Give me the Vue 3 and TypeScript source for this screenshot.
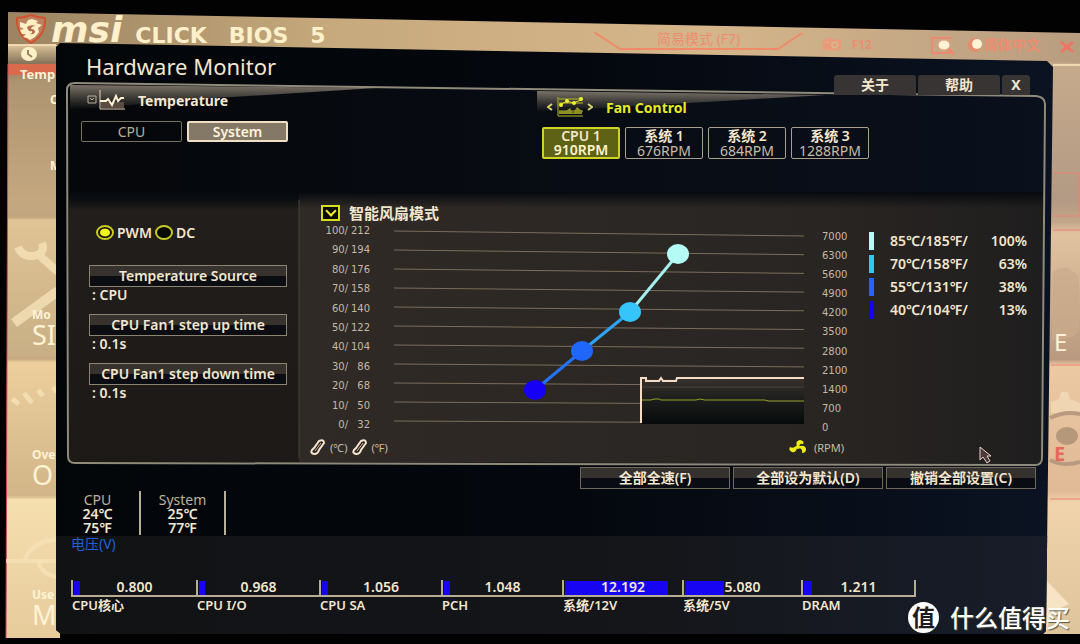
<script setup lang="ts">
import { ref } from 'vue'

interface Fan { name: string; rpm: string }
interface Point { x: number; y: number; color: string; temp: string; duty: string }
interface Rail { name: string; value: string; fill: number }

const fans: Fan[] = [
  { name: 'CPU 1', rpm: '910RPM' },
  { name: '系统 1', rpm: '676RPM' },
  { name: '系统 2', rpm: '684RPM' },
  { name: '系统 3', rpm: '1288RPM' },
]
const activeFan = ref(0)
const sensor = ref('System')
const mode = ref('pwm')
const smart = ref(true)

const settings = [
  { label: 'Temperature Source', value: ': CPU' },
  { label: 'CPU Fan1 step up time', value: ': 0.1s' },
  { label: 'CPU Fan1 step down time', value: ': 0.1s' },
]

const tempTicks: string[][] = [
  ['100/', '212'], ['90/', '194'], ['80/', '176'], ['70/', '158'], ['60/', '140'], ['50/', '122'],
  ['40/', '104'], ['30/', '86'], ['20/', '68'], ['10/', '50'], ['0/', '32'],
]
const rpmTicks = [7000, 6300, 5600, 4900, 4200, 3500, 2800, 2100, 1400, 700, 0]

const points: Point[] = [
  { x: 284, y: 24, color: '#b4fbf6', temp: '85℃/185℉/', duty: '100%' },
  { x: 236, y: 82, color: '#36c5fb', temp: '70℃/158℉/', duty: '63%' },
  { x: 188, y: 121, color: '#1f66fb', temp: '55℃/131℉/', duty: '38%' },
  { x: 141, y: 160, color: '#1600f5', temp: '40℃/104℉/', duty: '13%' },
]
const segments = [
  { from: points[1], to: points[0], color: '#a4f0ee' },
  { from: points[2], to: points[1], color: '#2fa4f5' },
  { from: points[3], to: points[2], color: '#2372f5' },
]

const rails: Rail[] = [
  { name: 'CPU核心', value: '0.800', fill: 5 },
  { name: 'CPU I/O', value: '0.968', fill: 5 },
  { name: 'CPU SA', value: '1.056', fill: 5 },
  { name: 'PCH', value: '1.048', fill: 5 },
  { name: '系统/12V', value: '12.192', fill: 87 },
  { name: '系统/5V', value: '5.080', fill: 33 },
  { name: 'DRAM', value: '1.211', fill: 7 },
]
</script>

<template>
  <div class="screen">
    <svg class="backdrop" viewBox="0 0 1080 644" preserveAspectRatio="none" aria-hidden="true">
      <defs>
        <linearGradient id="sky" x1="0" x2="1" y1="0" y2="0">
          <stop offset="0" stop-color="#9c8462" />
          <stop offset=".3" stop-color="#c6a97c" />
          <stop offset=".65" stop-color="#d5b68b" />
          <stop offset="1" stop-color="#b99d80" />
        </linearGradient>
        <linearGradient id="sideL" x1="0" x2="0" y1="0" y2="1">
          <stop offset="0" stop-color="#dcc499" />
          <stop offset=".03" stop-color="#87745a" />
          <stop offset=".06" stop-color="#ad9470" />
          <stop offset=".26" stop-color="#c4a77f" />
          <stop offset=".29" stop-color="#c0a67f" />
          <stop offset=".295" stop-color="#e0c496" />
          <stop offset=".53" stop-color="#c8ae84" />
          <stop offset=".535" stop-color="#eccf9c" />
          <stop offset=".76" stop-color="#d2b588" />
          <stop offset=".765" stop-color="#f6dfaf" />
          <stop offset="1" stop-color="#e6cb9b" />
        </linearGradient>
        <linearGradient id="sideR" x1="0" x2="0" y1="0" y2="1">
          <stop offset="0" stop-color="#c6aa8c" />
          <stop offset=".24" stop-color="#b39a84" />
          <stop offset=".28" stop-color="#c3a68a" />
          <stop offset=".3" stop-color="#e2c3a0" />
          <stop offset=".52" stop-color="#b99a80" />
          <stop offset=".53" stop-color="#ecc8a3" />
          <stop offset=".75" stop-color="#e0b996" />
          <stop offset=".77" stop-color="#f0d3aa" />
          <stop offset="1" stop-color="#dec49c" />
        </linearGradient>
      </defs>
      <path d="M8 12 L1080 33 V66 L8 46Z" fill="url(#sky)" />
      <path d="M8 45 H60 V638 H6Z" fill="url(#sideL)" />
      <path d="M1040 62 L1080 63 V634 H1040Z" fill="url(#sideR)" />
      <path d="M8 45H56 M1053 65H1080" stroke="#eed9b0" stroke-width="2" />
      <path d="M8 64H56V75H8Z" fill="#da6a4c" />
      <path d="M8 64L6 638" stroke="#d2485c" stroke-width="1" />
      <path d="M8 218H56M7 358H56M7 498H56" stroke="#cfa27d" opacity=".5" />
      <g fill="none" stroke="#f6e2b8" opacity=".8">
        <path d="M18 247q4 10 15 9q13-2 9-13M38 254L58 272" stroke-width="8" />
        <path d="M14 323L58 291" stroke-width="10" />
        <path d="M12 399l7 5M24 393l8 10M38 390l5 6M53 387l4 5" stroke-width="5" />
        <path d="M6 561H24Q32 541 56 540M24 561H56M38 563Q44 575 56 577" stroke-width="4" />
      </g>
      <path d="M1053 173H1079V216H1053M1053 230H1080M1051 365H1080M1050 499H1080" fill="none" stroke="#ea8274" />
      <path d="M1053 272q14-8 18-2q9 5 8 14v46q-5 10-27 10Z" fill="#c9ab8c" opacity=".7" />
      <path d="M1051 402l8-3 2-7h7l2 7 10 4v10h-29Z" fill="#f4ddbc" opacity=".7" />
      <ellipse cx="1067" cy="436" rx="11" ry="9" fill="#a98d72" opacity=".8" />
      <path d="M1050 418q14-7 30-4M1050 460q14 7 30 2" fill="none" stroke="#b99a80" stroke-width="4" />
      <path d="M1046 632V580L1069 604L1052 612Z" fill="#f6e4c4" />
    </svg>

    <header class="topbar">
      <svg class="shield" viewBox="0 0 32 30" aria-hidden="true">
        <path d="M2 4Q9 4 16 1Q23 4 30 4Q31 21 16 29Q1 21 2 4Z" fill="#b98262" stroke="#d0532f" stroke-width="2" />
        <path d="M5 8l6 2 2-4 4-1 6 2-2 2 6 2-4 3 1 4-4 5-5 3-3-2-4-1 3-3-4 0-2-4 4-1-4-2Z" fill="#fff0c3" />
        <path d="M12 13q4-3 9-1q-5 0-5 3q4 0 4 3q-1 3-5 2q3-1 2-3q-4 1-5-4Z" fill="#b36a4d" />
      </svg>
      <div class="brand">msi</div>
      <div class="product"><span>CLICK</span><span>BIOS</span><span>5</span></div>
      <button class="easy" type="button">
        <svg viewBox="0 0 210 22" preserveAspectRatio="none" aria-hidden="true">
          <path d="M0 1L26 18H184L208 2" fill="none" stroke="#f08a68" stroke-width="2" />
        </svg>
        <span>简易模式 (F7)</span>
      </button>
      <button class="snap" type="button">
        <svg viewBox="0 0 22 14" aria-hidden="true">
          <path d="M1 2h5l1-2h3v2h11v12H1Z" fill="#ea9a77" />
          <circle cx="14" cy="8" r="4" fill="#d9b68e" /><circle cx="14" cy="8" r="2" fill="#ea9a77" />
          <path d="M3 5h5" stroke="#d9b68e" />
        </svg>
        F12
      </button>
      <button class="find" type="button" aria-label="Search">
        <svg viewBox="0 0 26 20" aria-hidden="true">
          <path d="M22 2H2V17H20" fill="none" stroke="#ec8a70" stroke-width="2" />
          <ellipse cx="14" cy="9" rx="6" ry="5" fill="#fff3d4" stroke="#ec9a7a" />
          <path d="M18 13l6 5" stroke="#ec8a70" stroke-width="3" />
        </svg>
      </button>
      <button class="lang" type="button">
        <svg viewBox="0 0 18 18" aria-hidden="true">
          <circle cx="9" cy="10" r="7" fill="#e88b6d" /><circle cx="11" cy="9" r="5" fill="#fff3d4" />
        </svg>
        简体中文
      </button>
      <button class="quit" type="button" aria-label="Exit">
        <svg viewBox="0 0 14 12" aria-hidden="true"><path d="M1 1L13 11M13 1L1 11" stroke="#ee7762" stroke-width="3" /></svg>
      </button>
    </header>

    <div class="body">
      <aside class="side">
        <svg class="clock" viewBox="0 0 18 14" aria-hidden="true">
          <ellipse cx="9" cy="7" rx="8" ry="7" fill="#fff0c8" /><path d="M8 3v4l4 3" fill="none" stroke="#9c8462" stroke-width="2" />
        </svg>
        <b class="temp">Temp</b>
        <b class="cut first">C</b>
        <b class="cut">M</b>
        <div class="menu"><b>Mo</b><span>SI</span></div>
        <div class="menu"><b>Ove</b><span>O</span></div>
        <div class="menu"><b>Use</b><span>M</span></div>
      </aside>

      <main class="window">
        <div class="titlebar">
          <h1>Hardware Monitor</h1>
          <nav class="tabs">
            <button type="button">关于</button>
            <button type="button">帮助</button>
            <button type="button" class="x">X</button>
          </nav>
        </div>

        <section class="panel">
          <svg class="frame" viewBox="0 0 980 384" preserveAspectRatio="none" aria-hidden="true">
            <defs>
              <linearGradient id="deep" x1="0" x2="1" y1="0" y2="0">
                <stop offset="0" stop-color="#05070a" /><stop offset="1" stop-color="#0a101c" />
              </linearGradient>
              <linearGradient id="left" x1="0" x2="0" y1="0" y2="1">
                <stop offset="0" stop-color="#0a0b0d" /><stop offset=".06" stop-color="#211e1b" /><stop offset="1" stop-color="#1c1917" />
              </linearGradient>
              <linearGradient id="right" x1="0" x2="1" y1="0" y2="0">
                <stop offset="0" stop-color="#2f2a26" /><stop offset=".7" stop-color="#292522" /><stop offset="1" stop-color="#1f1e1e" />
              </linearGradient>
              <linearGradient id="shade" x1="0" x2="0" y1="0" y2="1">
                <stop offset="0" stop-color="#070a0f" /><stop offset="1" stop-color="#070a0f" stop-opacity="0" />
              </linearGradient>
              <linearGradient id="sheen" x1="0" x2="0" y1="0" y2="1">
                <stop offset="0" stop-color="#7b7367" /><stop offset="1" stop-color="#6d665a" stop-opacity="0" />
              </linearGradient>
            </defs>
            <path d="M1 8Q1 1 9 1L970 14Q979 15 979 22L976 376Q976 383 969 383L9 381Q2 381 2 374Z" fill="url(#deep)" />
            <path d="M3 112H233V380H9Q3 380 3 374Z" fill="url(#left)" />
            <path d="M233 112H978L975 376Q975 382 969 382L233 380Z" fill="url(#right)" />
            <path d="M3 110H977V126H3Z" fill="url(#shade)" />
            <path d="M233 118V376" stroke="#47423c" />
            <path d="M4 3L310 6L150 16L4 28Z" fill="url(#sheen)" />
            <path d="M471 9L760 13L640 20L471 30Z" fill="url(#sheen)" />
            <path d="M1 8Q1 1 9 1L970 14Q979 15 979 22L976 376Q976 383 969 383L9 381Q2 381 2 374Z" fill="none" stroke="#8f8a79" stroke-width="2" vector-effect="non-scaling-stroke" />
          </svg>

          <div class="upper">
            <section class="sensors">
              <h2>
                <svg viewBox="0 0 38 20" aria-hidden="true">
                  <path d="M1 6h8v7H1ZM3 8l2 2 2-2" fill="none" stroke="#b9b09b" />
                  <path d="M14 12h23v6H14Z" fill="#5c4b43" />
                  <path d="M13 0V19H38" fill="none" stroke="#e4d8bd" />
                  <path d="M13 11h6l2-2 4 6 4-9 2 5 3-3h3" fill="none" stroke="#fff2d4" stroke-width="2" />
                </svg>
                Temperature
              </h2>
              <div class="row">
                <button v-for="s in ['CPU', 'System']" :key="s" type="button" :class="{ on: sensor === s }" @click="sensor = s">{{ s }}</button>
              </div>
            </section>
            <section class="fans">
              <h2>
                <svg viewBox="0 0 46 20" aria-hidden="true">
                  <path d="M5 7L1 10L5 13M41 7L45 10L41 13" fill="none" stroke="#d8d56a" stroke-width="2" />
                  <path d="M11 0V19H36M12 2H36M12 6H36M12 14H36" fill="none" stroke="#b9bc25" />
                  <path d="M13 8L20 4L26 6L34 3" fill="none" stroke="#e5ea28" />
                  <path d="M12 14h7l4-3 3 5 4-6 5 4v3H12Z" fill="#8e9023" />
                  <g fill="#eff32c"><circle cx="14" cy="8" r="2" /><circle cx="20" cy="4" r="2" /><circle cx="27" cy="6" r="2" /><circle cx="34" cy="2" r="2" /></g>
                </svg>
                Fan Control
              </h2>
              <div class="row">
                <button v-for="(f, i) in fans" :key="f.name" type="button" :class="{ on: activeFan === i }" @click="activeFan = i">
                  <b>{{ f.name }}</b><span>{{ f.rpm }}</span>
                </button>
              </div>
            </section>
          </div>

          <div class="lower">
            <section class="options">
              <div class="modes">
                <label><input v-model="mode" type="radio" name="mode" value="pwm" />PWM</label>
                <label><input v-model="mode" type="radio" name="mode" value="dc" />DC</label>
              </div>
              <div v-for="s in settings" :key="s.label" class="setting">
                <button type="button">{{ s.label }}</button>
                <span>{{ s.value }}</span>
              </div>
            </section>

            <section class="chart">
              <label class="smart"><input v-model="smart" type="checkbox" />智能风扇模式</label>
              <div class="graph">
                <ul class="ticks temps">
                  <li v-for="t in tempTicks" :key="t[0]"><span>{{ t[0] }}</span><span>{{ t[1] }}</span></li>
                </ul>
                <svg class="plot" viewBox="0 0 410 195" preserveAspectRatio="none" role="img" aria-label="Fan curve">
                  <defs>
                    <linearGradient id="hist" x1="0" x2="0" y1="0" y2="1">
                      <stop offset="0" stop-color="#36312d" /><stop offset=".55" stop-color="#171a18" /><stop offset="1" stop-color="#070a0b" />
                    </linearGradient>
                  </defs>
                  <line v-for="n in 11" :key="n" x1="0" x2="410" :y1="1 + (n - 1) * 19" :y2="6 + (n - 1) * 18.7" stroke="#7b6d5b" />
                  <path d="M247 149H410V194H247Z" fill="url(#hist)" />
                  <path d="M247 157H410" stroke="#4a4038" />
                  <path d="M247 170h10l3-1h5l2 1h35l4-1 5 1h60l3 1h36" fill="none" stroke="#9aa02a" />
                  <path d="M247 193V148H252V151H265L267 148L269 151H282L283 148H410" fill="none" stroke="#f7dcc5" stroke-width="2" />
                  <line v-for="s in segments" :key="s.color" :x1="s.from.x" :y1="s.from.y" :x2="s.to.x" :y2="s.to.y" :stroke="s.color" stroke-width="3" />
                  <ellipse v-for="p in points" :key="p.temp" :cx="p.x" :cy="p.y" rx="11" ry="10" :fill="p.color" />
                </svg>
                <ul class="ticks rpms"><li v-for="r in rpmTicks" :key="r">{{ r }}</li></ul>
                <ul class="legend">
                  <li v-for="p in points" :key="p.temp">
                    <svg viewBox="0 0 5 18" aria-hidden="true"><rect width="5" height="18" :fill="p.color" /></svg>
                    <span>{{ p.temp }}</span><span>{{ p.duty }}</span>
                  </li>
                </ul>
              </div>
              <div class="units">
                <template v-for="u in ['(℃)', '(℉)']" :key="u">
                  <svg class="thermo" viewBox="0 0 16 16" aria-hidden="true">
                    <path d="M9 2Q14 0 14 4L9 11Q8 15 4 15Q0 14 2 11L4 9Z" fill="#2c2623" stroke="#f5e5cb" stroke-width="2" />
                    <path d="M11 4L5 12" stroke="#d9b3a0" />
                  </svg>
                  <span>{{ u }}</span>
                </template>
                <svg class="fan" viewBox="0 0 18 14" aria-hidden="true">
                  <path d="M8 6Q6 1 11 0Q16 1 14 4Q11 3 10 6ZM11 6Q16 5 17 9Q17 13 13 13Q14 9 10 8ZM8 8Q7 13 3 12Q-1 10 1 7Q4 9 7 6Z" fill="#f3ee12" />
                  <circle cx="9" cy="7" r="2" fill="#f3ee12" />
                </svg>
                <span>(RPM)</span>
              </div>
            </section>
          </div>
        </section>

        <div class="actions">
          <button type="button">全部全速(F)</button>
          <button type="button">全部设为默认(D)</button>
          <button type="button">撤销全部设置(C)</button>
        </div>

        <div class="readouts">
          <div><span>CPU</span><b>24℃</b><b>75℉</b></div>
          <div><span>System</span><b>25℃</b><b>77℉</b></div>
        </div>

        <section class="voltage">
          <h2>电压(V)</h2>
          <ul>
            <li v-for="r in rails" :key="r.name">
              <div class="meter"><i :style="{ width: r.fill + '%' }"></i><span>{{ r.value }}</span></div>
              <span>{{ r.name }}</span>
            </li>
          </ul>
        </section>
      </main>

      <aside class="side right"><span>E</span><b>E</b></aside>
    </div>

    <svg class="cursor" viewBox="0 0 14 18" aria-hidden="true">
      <path d="M1 1V14L4 11L8 17L11 15L8 10L12 10Z" fill="#4b3a38" stroke="#e8cfc4" />
    </svg>
    <div class="watermark"><i>值</i><span>什么值得买</span></div>
  </div>
</template>

<style>
body { margin: 0; background: #030202; }
</style>

<style scoped>
.screen {
  position: relative;
  min-height: 100vh;
  overflow: hidden;
  background: #030202;
  color: #f3e6cf;
  font-family: "Noto Sans", "Noto Sans CJK SC", sans-serif;
  font-size: 14px;
}
.screen * { box-sizing: border-box; }
button { font: inherit; color: inherit; background: none; border: 0; padding: 0; cursor: default; white-space: nowrap; }
h1, h2, ul { margin: 0; padding: 0; font-weight: 400; list-style: none; }
h2 { font-size: 14px; }
svg { display: block; flex: none; }
.backdrop { position: absolute; inset: 0; width: 100%; height: 100%; }

.topbar { position: relative; display: flex; height: 43px; padding: 12px 6px 0 15px; color: #ed8d70; white-space: nowrap; }
.shield { width: 32px; height: 30px; margin-top: 2px; }
.brand { margin-left: 4px; font: italic bold 36px/36px "DejaVu Sans", sans-serif; color: #fff0cc; }
.product { display: flex; gap: 22px; margin: 11px 0 0 13px; font: bold 22px/26px "DejaVu Sans", sans-serif; color: #fff0cc; }
.easy { position: relative; width: 210px; height: 22px; margin: 19px 18px 0 auto; }
.easy svg { position: absolute; inset: 0; width: 100%; height: 100%; }
.easy span { position: relative; display: block; margin-top: -6px; line-height: 14px; }
.snap { display: flex; align-items: center; gap: 10px; height: 20px; margin-top: 22px; font-weight: 700; font-size: 12px; }
.snap svg { width: 20px; height: 14px; }
.find { margin: 24px 10px 0 58px; height: 20px; }
.find svg { width: 26px; height: 20px; }
.lang { display: flex; align-items: center; height: 20px; margin-top: 22px; font-weight: 700; font-size: 14px; }
.lang svg { width: 18px; height: 18px; }
.quit { height: 12px; margin: 29px 0 0 20px; }
.quit svg { width: 14px; height: 12px; }

.body { position: relative; display: grid; grid-template-columns: 56px minmax(0, 1fr) 27px; align-items: start; }
.side { display: flex; flex-direction: column; overflow: hidden; padding: 4px 0 0 20px; color: #fff3d6; }
.clock { width: 18px; height: 14px; }
.temp { margin-top: 4px; font-size: 13px; line-height: 18px; }
.cut { margin-left: 30px; font-size: 12px; line-height: 20px; }
.cut.first { margin-top: 7px; margin-bottom: 46px; }
.menu { display: flex; flex-direction: column; height: 140px; margin-left: 12px; }
.menu:first-of-type { margin-top: 132px; }
.menu:last-of-type { height: 44px; }
.menu b { font-size: 12px; line-height: 13px; }
.menu span { font-size: 27px; line-height: 28px; }
.right { padding: 285px 0 0 1px; }
.right span { font-size: 24px; line-height: 28px; }
.right b { margin-top: 84px; font-size: 20px; line-height: 28px; color: #e4685c; }

.window {
  background: linear-gradient(90deg, #030609, #04070d 50%, #0b1322);
  clip-path: polygon(0 4px, 4px 0, calc(100% - 6px) 18px, 100% 24px, calc(100% - 7px) calc(100% - 3px), calc(100% - 10px) 100%, 5px 100%, 0 calc(100% - 4px));
}
.titlebar { position: relative; z-index: 1; display: flex; justify-content: space-between; align-items: flex-end; height: 52px; padding: 0 23px 0 30px; }
h1 { align-self: flex-start; margin-top: 9px; font-size: 22px; line-height: 28px; }
.tabs { display: flex; gap: 2px; }
.tabs button { width: 82px; height: 20px; border-radius: 3px 3px 0 0; background: #373433; font-weight: 700; line-height: 14px; }
.tabs .x { width: 28px; }

.panel { position: relative; margin: -13px 7px 0 10px; }
.frame { position: absolute; inset: 0; width: 100%; height: 100%; }
.upper { position: relative; display: grid; grid-template-columns: 471px minmax(0, 1fr); height: 115px; }
.upper h2 { display: flex; align-items: center; gap: 13px; height: 20px; font-weight: 700; }
.row { display: flex; gap: 5px; }
.sensors { padding: 8px 0 0 15px; }
.sensors h2 { padding-left: 6px; }
.sensors h2 svg { width: 38px; height: 20px; }
.sensors .row { margin-top: 11px; }
.sensors button { width: 101px; height: 21px; border: 1px solid #77715f; border-radius: 2px; color: #b8ae98; line-height: 15px; }
.sensors .on { border: 2px solid #efdfc4; background: #847867; color: #fff3dc; font-weight: 600; line-height: 13px; }
.fans { padding: 15px 0 0 5px; }
.fans h2 { padding-left: 5px; color: #e4ea28; }
.fans h2 svg { width: 46px; height: 20px; }
.fans .row { margin-top: 10px; }
.fans button { display: flex; flex-direction: column; align-items: center; width: 78px; height: 32px; border: 1px solid #aaa08c; border-radius: 2px; line-height: 15px; color: #c8bda8; }
.fans button b { color: #f5e7ce; font-weight: 600; }
.fans .on { border: 2px solid #d0d425; background: #5d6214; color: #fff5cf; font-weight: 600; line-height: 14px; }

.lower { position: relative; display: grid; grid-template-columns: 234px minmax(0, 1fr); height: 269px; }
.options { padding: 27px 13px 0 23px; font-weight: 600; }
.modes { display: flex; gap: 3px; padding-left: 7px; margin-bottom: 25px; }
.modes label { display: flex; align-items: center; gap: 3px; height: 16px; }
input { appearance: none; margin: 0; border: 2px solid #c9cd20; background: #080a05; }
.modes input { width: 18px; height: 15px; border-radius: 50%; }
.modes input:checked { background: radial-gradient(ellipse, #f4f61a 45%, #14160a 55%); }
.setting { height: 49px; }
.setting button { display: block; width: 100%; height: 22px; border: 1px solid #8c8371; background: linear-gradient(#37322e 0 50%, #0b0d12 50%); font-weight: 600; line-height: 16px; }
.setting span { display: block; padding-left: 3px; line-height: 16px; }

.chart { padding: 7px 19px 0 0; }
.smart { display: flex; align-items: center; gap: 9px; height: 18px; padding-left: 21px; font-size: 15px; line-height: 16px; font-weight: 700; }
.smart input { display: grid; place-items: center; width: 19px; height: 16px; border-color: #d9dd22; }
.smart input:checked::after { content: ""; width: 6px; height: 6px; margin-top: -4px; border: solid #f0f32a; border-width: 0 2px 2px 0; transform: rotate(45deg); }
.graph { display: grid; grid-template-columns: 70px minmax(0, 1fr) 29px 158px; column-gap: 18px; margin-top: 3px; }
.ticks { display: flex; flex-direction: column; justify-content: space-between; height: 206px; font: 10px/12px "DejaVu Sans", sans-serif; color: #c5b8a5; }
.temps li { display: flex; justify-content: flex-end; }
.temps li span:last-child { width: 22px; text-align: right; }
.plot { width: calc(100% - 6px); height: 195px; margin: 5px 0 0 6px; }
.rpms { height: 203px; margin-top: 6px; }
.legend { padding-top: 4px; font-weight: 600; }
.legend li { display: flex; align-items: center; height: 23px; }
.legend svg { width: 5px; height: 18px; margin-right: 16px; }
.legend span:last-child { margin-left: auto; }
.units { display: flex; align-items: center; gap: 4px; height: 18px; margin-top: 4px; padding: 0 183px 0 10px; font-size: 11px; color: #c9bda9; }
.thermo { width: 16px; height: 16px; }
.fan { width: 18px; height: 14px; margin: 0 3px 0 auto; }

.actions { display: flex; justify-content: flex-end; gap: 3px; padding: 0 17px 0 0; margin-top: 1px; }
.actions button { width: 150px; height: 22px; border: 1px solid #6f685b; background: linear-gradient(#35312e 0 48%, #090c13 48%); font-weight: 600; line-height: 14px; }
.readouts { display: flex; height: 44px; margin-top: 2px; }
.readouts div { display: flex; flex-direction: column; align-items: center; justify-content: flex-end; width: 85px; border-right: 2px solid #b9ae98; line-height: 14px; }
.readouts span { color: #bdb29c; }
.readouts b { font-weight: 600; }

.voltage { min-height: 98px; margin-top: 1px; padding: 0 137px 0 15px; background: linear-gradient(90deg, #111214, #14161a 60%, #181d2a); }
.voltage h2 { color: #1c62d8; line-height: 16px; }
.voltage ul { display: grid; grid-template-columns: 125fr 123fr 122fr 121fr 120fr 119fr 115fr; margin-top: 28px; }
.meter { position: relative; height: 17px; border-left: 2px solid #b7ac95; border-bottom: 2px solid #b7ac95; text-align: center; font-weight: 600; line-height: 13px; }
.voltage li:last-child .meter { border-right: 2px solid #b7ac95; }
.meter i { position: absolute; inset: 1px auto 0 1px; background: #1704f3; }
.meter span { position: relative; }
.voltage li > span { display: block; padding-left: 1px; font-size: 13px; font-weight: 600; line-height: 16px; }

.cursor { position: absolute; left: 979px; top: 446px; width: 14px; height: 18px; }
.watermark { position: absolute; right: 10px; bottom: 10px; display: flex; align-items: center; gap: 11px; height: 34px; color: #fff; font: 500 24px/34px "Noto Sans CJK SC", sans-serif; text-shadow: 1px 1px 1px #554; }
.watermark i { width: 31px; height: 31px; border-radius: 50%; background: #fff; color: #1b1b20; font-size: 23px; font-weight: 700; font-style: normal; line-height: 29px; text-align: center; text-shadow: none; }
</style>
